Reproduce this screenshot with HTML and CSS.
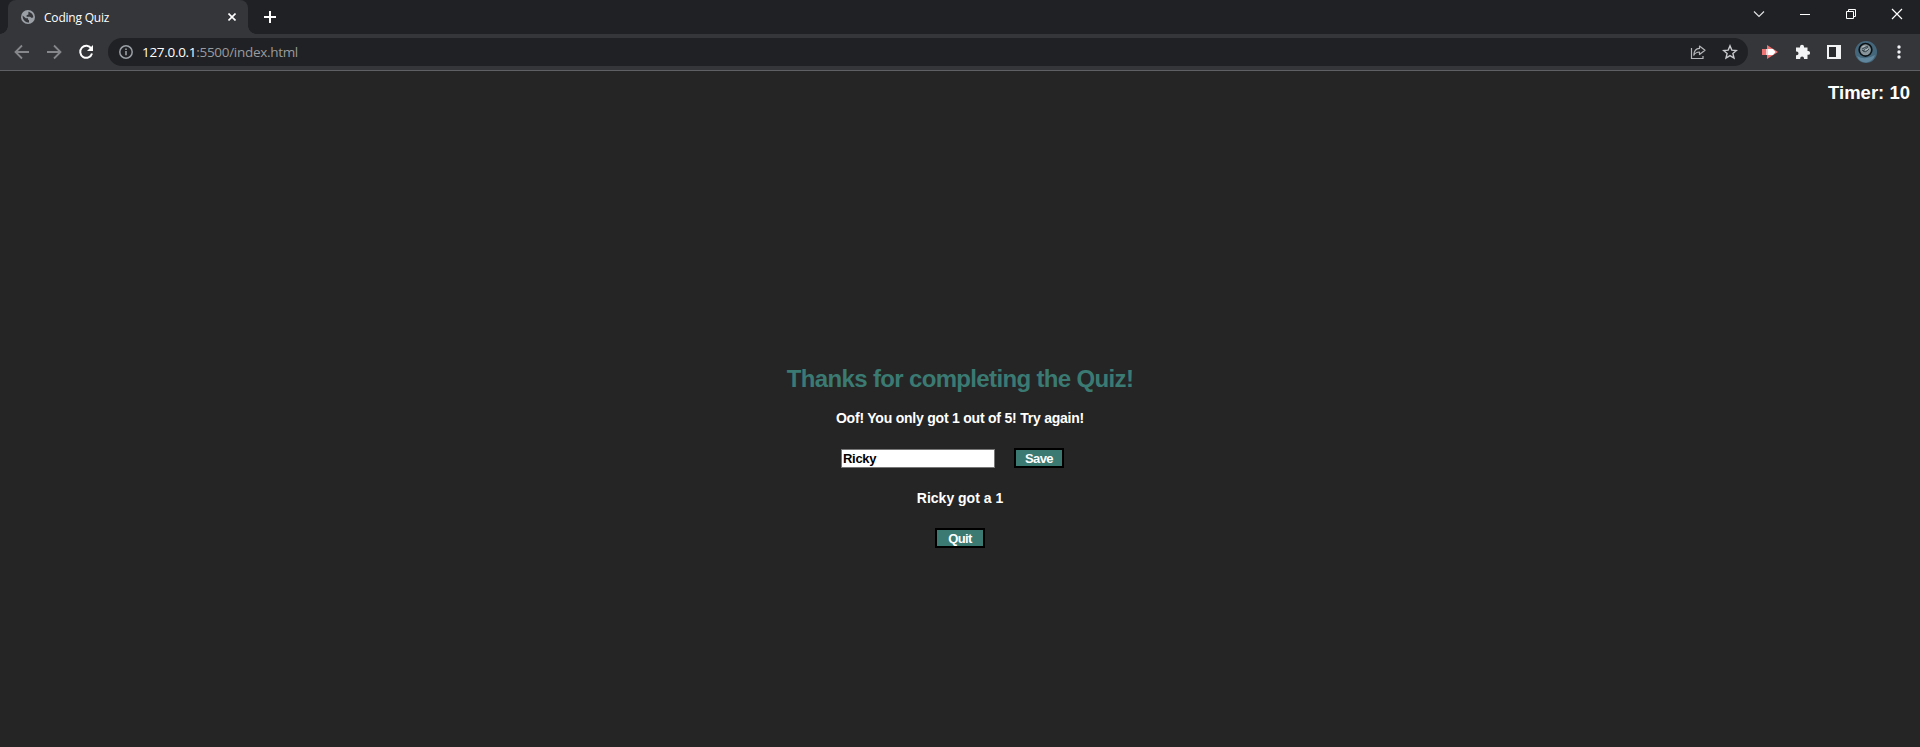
FILE: index.html
```
<!DOCTYPE html>
<html lang="en">
<head>
<meta charset="utf-8">
<title>Coding Quiz</title>
<link rel="stylesheet" href="styles.css">
</head>
<body>
<header class="tabstrip">
  <div class="tab">
    <svg class="globe" width="14" height="14" viewBox="0 0 14 14"><circle cx="7" cy="7" r="7" fill="#9aa0a6"/><path d="M1.6 5.6 4.8 8.2H7v1.3l1 .8v2.1C5 13 1.5 10.5 1.6 5.6ZM7.4 1.7C9 1.7 12.4 4 12.3 7.2L10.8 8 9 6.7H5.6V5.2l1.8-.8Z" fill="#35363a"/></svg>
    <span class="tab-title">Coding Quiz</span>
    <svg class="tab-close" width="8" height="8" viewBox="0 0 8 8"><path d="m.5.5 7 7m0-7-7 7" stroke="#fff" stroke-width="1.6"/></svg>
  </div>
  <svg class="new-tab" width="12" height="12" viewBox="0 0 12 12"><path d="M6 0v12M0 6h12" stroke="#fff" stroke-width="2"/></svg>
  <div class="window-controls">
    <svg width="12" height="12" viewBox="0 0 12 12"><path d="m1 3.500 5 5 5-5" fill="none" stroke="#e0e1e2" stroke-width="1.200"/></svg>
    <svg width="12" height="12" viewBox="0 0 12 12"><path d="M1 6.500h10" stroke="#fff"/></svg>
    <svg width="12" height="12" viewBox="0 0 12 12"><path d="M1.500 3.500h7v7h-7zM3.500 3.500v-2h7v7h-2" fill="none" stroke="#fff"/></svg>
    <svg width="12" height="12" viewBox="0 0 12 12"><path d="m1 1 10 10M11 1 1 11" stroke="#fff" stroke-width="1.200"/></svg>
  </div>
</header>
<nav class="toolbar">
  <div class="nav-buttons">
    <svg width="16" height="16" viewBox="0 0 16 16"><path d="M15 8H2M8 1.500 1.500 8 8 14.500" fill="none" stroke="#85878a" stroke-width="1.800"/></svg>
    <svg width="16" height="16" viewBox="0 0 16 16"><path d="M1 8h13M8 1.500 14.500 8 8 14.500" fill="none" stroke="#85878a" stroke-width="1.800"/></svg>
    <svg width="16" height="16" viewBox="0 0 16 16"><path d="M13.300 4.600A6 6 0 1 0 14 9.500" fill="none" stroke="#fff" stroke-width="2"/><path d="M15 1v6H9Z" fill="#fff"/></svg>
  </div>
  <div class="omnibox">
    <svg width="14" height="14" viewBox="0 0 14 14"><circle cx="7" cy="7" r="6.200" fill="none" stroke="#9aa0a6" stroke-width="1.500"/><path d="M7 6v4.300M7 3.500V5" stroke="#9aa0a6" stroke-width="1.600"/></svg>
    <span class="url"><b class="host">127.0.0.1</b>:5500/index.html</span>
    <svg class="share" width="16" height="16" viewBox="0 0 16 16"><path d="M1.500 4v10.500h11.500V12" fill="none" stroke="#b4b6b9" stroke-width="1.200"/><path d="M9.500 2 15 6.300l-5.500 4.200V8C7 8 5 9 3.800 11.200 4 7 6 4.600 9.500 4.400Z" fill="none" stroke="#b4b6b9" stroke-width="1.200" stroke-linejoin="round"/></svg>
    <svg class="star" width="16" height="16" viewBox="0 0 16 16"><path d="m8 1.800 1.800 4.300 4.600.4-3.500 3 1.100 4.600-4-2.500-4 2.500 1.100-4.600-3.500-3 4.600-.4Z" fill="none" stroke="#c8cacd" stroke-width="1.400"/></svg>
  </div>
  <div class="extensions">
    <svg width="16" height="14" viewBox="0 0 16 14"><path d="M0 4h5V0l11 7-11 7v-4H0Z" fill="#ee7573"/><path d="M4 4h7v6H4Z" fill="#fff"/><path d="M4 4h2v6H4Z" fill="#f9d0cf"/><path d="m11 4 2.500 3-2.500 3Z" fill="#fff"/></svg>
    <svg class="puzzle" width="16" height="16" viewBox="0 0 16 16"><path d="M1 3.500h4v-.8a2 2 0 0 1 4 0v.8h3.500V7h.7a1.900 1.900 0 0 1 0 3.800h-.7V15H9v-.7a1.900 1.900 0 0 0-3.800 0v.7H1v-3.800h.7a1.800 1.800 0 0 0 0-3.600H1Z" fill="#f1f3f4"/></svg>
    <svg class="panel" width="14" height="14" viewBox="0 0 14 14"><path d="M0 0h14v14H0Z" fill="#f1f3f4"/><path d="M2 2h7v10H2Z" fill="#292a2d"/></svg>
    <svg class="avatar" width="22" height="22" viewBox="0 0 22 22"><circle cx="11" cy="11" r="11" fill="#45677c"/><path d="M2 15q8 5 18-1-2 7-9 7.500Q4 21 2 15Z" fill="#5f869c"/><circle cx="10.500" cy="8.800" r="6.300" fill="#87949a" stroke="#0b1216" stroke-width="1.700"/><path d="m7 8 6-3M7 9q3 4 7-1M8 10l5-4" fill="none" stroke="#26343b" stroke-width=".8"/><path d="m7 6 3-1m0 4 3-1" stroke="#b2bdc2"/></svg>
    <svg class="menu" width="4" height="14" viewBox="0 0 4 14"><g fill="#f1f3f4"><circle cx="2" cy="2" r="1.700"/><circle cx="2" cy="7" r="1.700"/><circle cx="2" cy="12" r="1.700"/></g></svg>
  </div>
</nav>
<main class="page">
  <div class="timer">Timer: 10</div>
  <section class="results">
    <h1 class="title">Thanks for completing the Quiz!</h1>
    <p class="message">Oof! You only got 1 out of 5! Try again!</p>
    <form class="score-form">
      <input class="name" type="text" value="Ricky" aria-label="Name">
      <button class="btn" type="button">Save</button>
    </form>
    <p class="score">Ricky got a 1</p>
    <button class="btn quit" type="button">Quit</button>
  </section>
</main>
</body>
</html>
```
FILE: styles.css
```
* { box-sizing: border-box; }
body {
  margin: 0;
  height: 747px;
  overflow: hidden;
  display: flex;
  flex-direction: column;
  background: #252525;
  color: #fff;
  font-family: "Liberation Sans", sans-serif;
}
svg { display: block; flex: none; }

.tabstrip {
  display: flex;
  height: 34px;
  padding-left: 8px;
  background:
    radial-gradient(circle at 0 0, #202124 7.500px, #35363a 8px) 0 26px / 8px 8px no-repeat,
    radial-gradient(circle at 8px 0, #202124 7.500px, #35363a 8px) 248px 26px / 8px 8px no-repeat,
    #202124;
}
.tab {
  display: flex;
  align-items: center;
  width: 240px;
  padding: 0 12px 0 13px;
  border-radius: 8px 8px 0 0;
  background: #35363a;
  font: 12px "Open Sans", sans-serif;
}
.tab-title { margin-left: 9px; letter-spacing: -0.2px; }
.tab-close { margin-left: auto; }
.new-tab { margin: 11px 0 0 16px; }
.window-controls { display: flex; gap: 34px; margin: 8px 17px 0 auto; }

.toolbar {
  display: flex;
  align-items: center;
  height: 37px;
  padding: 0 19px 1px 14px;
  border-bottom: 1px solid #5f6063;
  background: #35363a;
}
.nav-buttons { display: flex; gap: 16px; width: 94px; }
.omnibox {
  display: flex;
  align-items: center;
  flex: 1;
  height: 28px;
  padding: 0 10px 0 11px;
  border-radius: 14px;
  background: #202124;
}
.url {
  margin-left: 9px;
  color: #999b9e;
  font: 13.500px "Open Sans", sans-serif;
  letter-spacing: -0.3px;
}
.host { color: #fff; font-weight: 400; }
.share { margin-left: auto; }
.star { margin-left: 16px; }
.extensions { display: flex; align-items: center; margin-left: 14px; }
.puzzle { margin-left: 17px; }
.panel { margin-left: 16px; }
.avatar { margin-left: 14px; }
.menu { margin-left: 20px; }

.page { flex: 1; font-weight: 700; }
.timer {
  height: 22px;
  margin: 11px 10px 0 0;
  text-align: right;
  font-size: 18.500px;
  line-height: 22px;
}
.results {
  display: flex;
  flex-direction: column;
  align-items: center;
  margin-top: 259px;
}
.title {
  height: 32px;
  margin: 0;
  color: #3a7a73;
  font-size: 24px;
  line-height: 32px;
  letter-spacing: -0.65px;
}
.message, .score {
  height: 20px;
  margin: 13px 0 0;
  font-size: 14px;
  line-height: 20px;
}
.message { letter-spacing: -0.22px; }
.score-form { display: flex; gap: 19px; margin: 20px 0 0 -15px; }
.name {
  width: 154px;
  height: 19px;
  margin-top: 1px;
  padding: 0 1px;
  border: 1px solid #767676;
  background: #fff;
  color: #000;
  font: bold 13px "Liberation Sans", sans-serif;
  letter-spacing: -0.3px;
}
.score { margin-top: 20px; }
.btn {
  width: 50px;
  height: 20px;
  padding: 1px 0 0;
  border: 2px solid #000;
  background: #3a7a73;
  color: #fff;
  font: bold 13px/15px "Liberation Sans", sans-serif;
  letter-spacing: -0.6px;
}
.quit { margin-top: 20px; }
```
